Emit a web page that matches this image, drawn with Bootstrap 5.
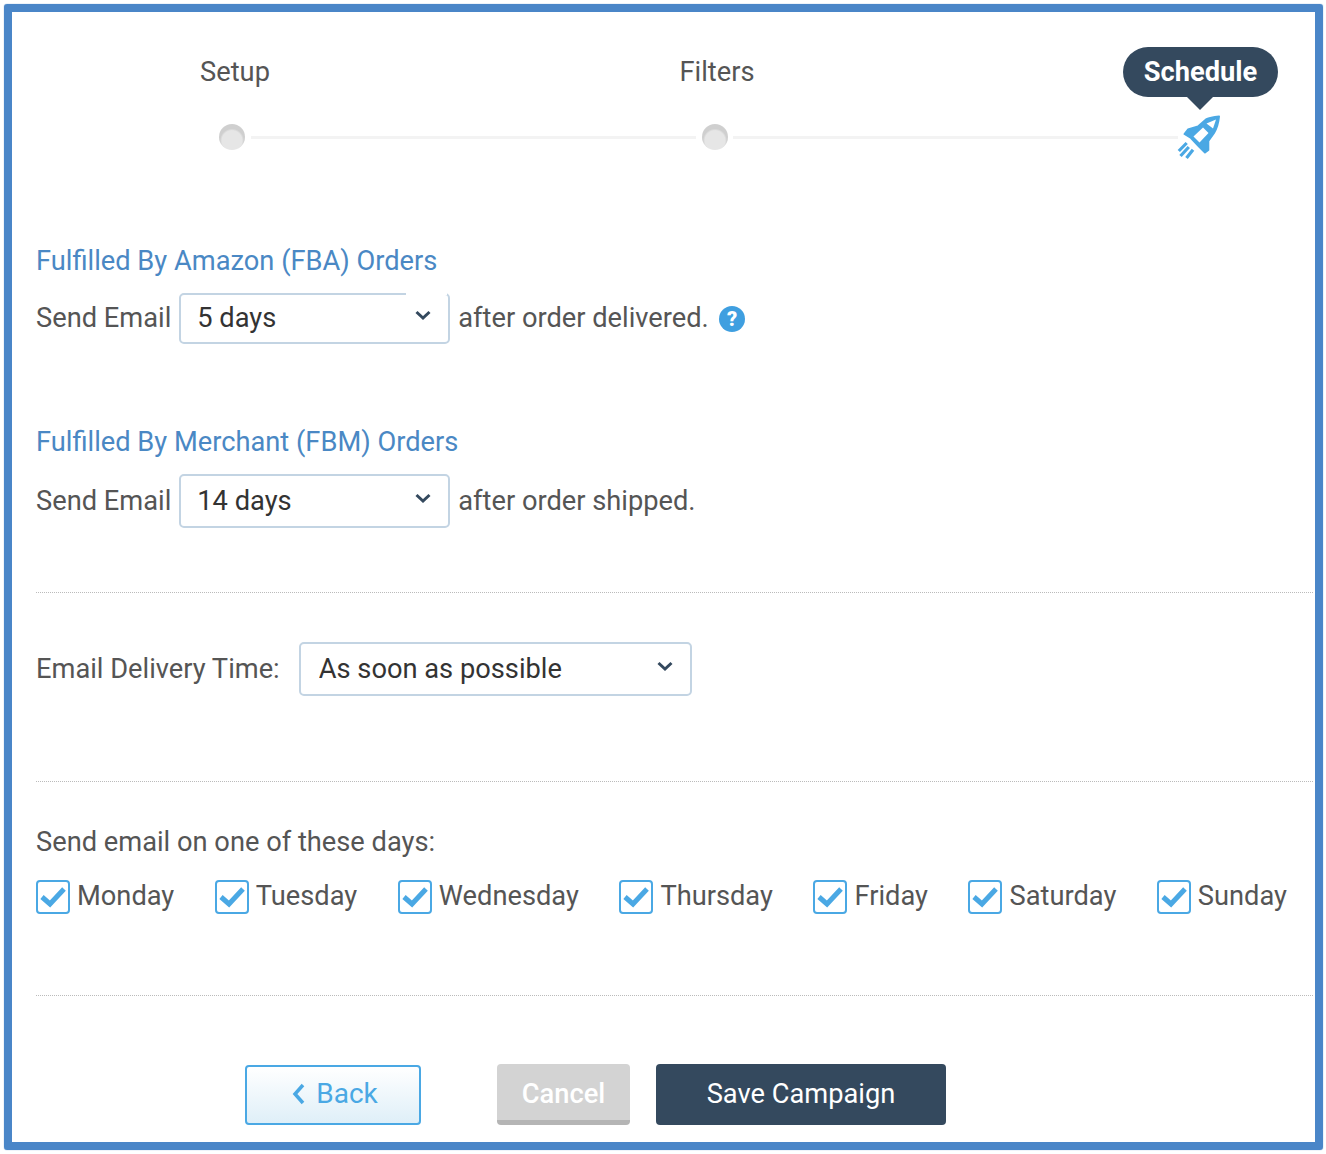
<!DOCTYPE html>
<html lang="en">
<head>
<meta charset="utf-8">
<title>Schedule</title>
<link href="https://cdn.jsdelivr.net/npm/bootstrap@5.3.0/dist/css/bootstrap.min.css" rel="stylesheet">
<style>
html,body{height:100%;background:#fff}
body{padding:4px 3px 4px 4px;font-family:Roboto,"Liberation Sans",sans-serif;font-size:27.25px;line-height:36px;color:#555}
.frame{height:1146px;border:8px solid #4a86c8;border-radius:3px;padding:0 0 0 24px;overflow:hidden;box-shadow:0 0 1px #4a86c8}
.step-name{position:absolute;top:0;transform:translateX(-50%)}
.step-holder{position:relative;height:49px;margin-top:35px}
.step-name.one{left:199px;top:7px}
.step-name.two{left:681px;top:7px}
.bubble{position:absolute;left:1087px;top:0;width:155px;height:50px;border-radius:25px;background:#34495e;color:#fff;font-weight:700;text-align:center;line-height:50px}
.bubble::after{content:"";position:absolute;left:63px;top:49px;border:14px solid transparent;border-top-color:#34495e;border-bottom:0}
.track{height:50px;padding-left:183px;margin-top:16px}
.dot{flex:none;width:26px;height:26px;border-radius:50%;background:radial-gradient(circle at 50% 64%,#e6e6e6 0,#e6e6e6 10px,#cfcfcf 12px)}
.dot-line{flex:none;height:3px;background:#f3f3f3}
.line-a{width:445px;margin:0 6px}
.line-b{width:445px;margin:0 0 0 5px}
.rocket{flex:none;margin-left:-1px}
.sub-head{color:#4a88c4;margin:0;font-size:27.25px;font-weight:400;line-height:36px}
.pick-wrap{position:relative;display:block;flex:none}
.pick{display:block;width:100%;height:100%;padding:0 0 0 16px;border:2px solid #c3d4e3;border-radius:5px;color:#333;font-size:27.25px;font-family:inherit;line-height:36px;background-color:#fff;background-image:url("data:image/svg+xml,%3Csvg xmlns='http://www.w3.org/2000/svg' viewBox='0 0 16 11'%3E%3Cpath d='M1.500 2l6.500 6 6.500-6' fill='none' stroke='%2334495e' stroke-width='3'/%3E%3C/svg%3E");background-repeat:no-repeat;background-size:16px 11px;background-position:right 17px top calc(50% - 3px);box-shadow:none}
.pick-gap::after{content:"";position:absolute;top:0;left:227px;right:3px;height:2px;background:#fff}
.pick-up{padding-bottom:2px}
.pick-wide{padding-left:18px}
.w-a{width:271px}
.h-a{height:51px}
.h-b{height:54px}
.w-b{width:393px;height:54px}
.sec-a{margin-top:81px}
.sec-b{margin-top:80px}
.sec-row{margin-top:14px;gap:8px}
.sec-row2{margin-top:14px;gap:8px}
.lift{padding-bottom:2px}
.help{margin-left:1px;margin-top:1px;flex:none}
.rule{border:0;border-top:1.500px dotted #bbb;opacity:1;margin:0;margin-right:2px}
.rule-1{margin-top:64px}
.time-row{margin-top:49px;gap:19px}
.rule-2{margin-top:85px}
.days-label{margin-top:42px}
.days{margin-top:19px;width:1251px}
.day{display:flex;align-items:center;gap:7px;margin:0;color:#555;height:36px;padding-bottom:2px}
.tick{flex:none;width:34px;height:34px;margin-top:2px;border:2.500px solid #4aa8e4;border-radius:4px;display:flex;align-items:center;justify-content:center;background:#fff}
.rule-3{margin-top:80px}
.actions{margin-top:68px;padding-left:209px}
.act{display:block;border-radius:4px;font-size:27.25px;line-height:36px;height:61px;padding:0 0 2px;text-align:center}
.act-back{width:176px;height:60px;margin-top:1px;border:2px solid #4aa8e4;background:linear-gradient(#fff,#dfeff8);color:#4aa8e4;font-size:28px;padding-left:4px;display:flex;align-items:center;justify-content:center;gap:11px}
.act-cancel{width:133px;margin-left:76px;border:0;border-bottom:5px solid #b5b5b5;background:#d3d3d3;color:#fff;font-weight:500;padding:4px 0 0}
.act-save{width:290px;margin-left:26px;border:0;background:#34495e;color:#fff}
.act-back:hover{color:#4aa8e4}
</style>
</head>
<body>
<div class="frame">
  <div class="step-holder">
    <span class="step-name one">Setup</span>
    <span class="step-name two">Filters</span>
    <span class="bubble">Schedule</span>
  </div>
  <div class="track d-flex align-items-center">
    <span class="dot"></span>
    <span class="dot-line line-a"></span>
    <span class="dot"></span>
    <span class="dot-line line-b"></span>
    <svg class="rocket" width="46" height="46" viewBox="0 0 46 46" fill="none">
      <path d="M42 2.500C37 3 32 4 29 5.500L21 12.500 11 15.500 7.500 20l6.500 4 8 8.500 6 6 3.300-2.500V27L37 19C40 14 41.500 8 42 2.500z" fill="#4aa8e4" stroke="#4aa8e4" stroke-width="2" stroke-linejoin="round"/>
      <path d="M31.500 19L26 13.500 16.500 22.500 22.500 28.500z" fill="#fff"/>
      <path d="M29.500 9.500L39 5.500 36 14.500z" fill="#fff"/>
      <path d="M9.700 29L1.800 37M11.800 33L3.500 42M16 35.700L9.500 44" stroke="#4aa8e4" stroke-width="3.200"/>
    </svg>
  </div>

  <h2 class="sub-head sec-a">Fulfilled By Amazon (FBA) Orders</h2>
  <div class="d-flex align-items-center sec-row">
    <span class="lift">Send Email</span>
    <span class="pick-wrap pick-gap w-a h-a">
      <select class="form-select pick pick-up" aria-label="FBA days"><option>5 days</option></select>
    </span>
    <span class="lift">after order delivered.</span>
    <svg class="help" width="28" height="28" viewBox="0 0 28 28">
      <circle cx="14" cy="14" r="13" fill="#3f9fe0"/>
      <text x="14" y="21" text-anchor="middle" font-family="Roboto,sans-serif" font-weight="900" font-size="20" fill="#fff">?</text>
    </svg>
  </div>

  <h2 class="sub-head sec-b">Fulfilled By Merchant (FBM) Orders</h2>
  <div class="d-flex align-items-center sec-row2">
    <span>Send Email</span>
    <span class="pick-wrap w-a h-b">
      <select class="form-select pick" aria-label="FBM days"><option>14 days</option></select>
    </span>
    <span>after order shipped.</span>
  </div>

  <hr class="rule rule-1">

  <div class="d-flex align-items-center time-row">
    <span>Email Delivery Time:</span>
    <span class="pick-wrap w-b">
      <select class="form-select pick pick-wide" aria-label="Delivery time"><option>As soon as possible</option></select>
    </span>
  </div>

  <hr class="rule rule-2">

  <div class="days-label">Send email on one of these days:</div>
  <div class="d-flex justify-content-between days">
    <label class="day"><span class="tick"><svg width="26" height="22" viewBox="0 0 26 22"><path d="M2 11l8 7L24 3" fill="none" stroke="#4aa8e4" stroke-width="5"/></svg></span>Monday</label>
    <label class="day"><span class="tick"><svg width="26" height="22" viewBox="0 0 26 22"><path d="M2 11l8 7L24 3" fill="none" stroke="#4aa8e4" stroke-width="5"/></svg></span>Tuesday</label>
    <label class="day"><span class="tick"><svg width="26" height="22" viewBox="0 0 26 22"><path d="M2 11l8 7L24 3" fill="none" stroke="#4aa8e4" stroke-width="5"/></svg></span>Wednesday</label>
    <label class="day"><span class="tick"><svg width="26" height="22" viewBox="0 0 26 22"><path d="M2 11l8 7L24 3" fill="none" stroke="#4aa8e4" stroke-width="5"/></svg></span>Thursday</label>
    <label class="day"><span class="tick"><svg width="26" height="22" viewBox="0 0 26 22"><path d="M2 11l8 7L24 3" fill="none" stroke="#4aa8e4" stroke-width="5"/></svg></span>Friday</label>
    <label class="day"><span class="tick"><svg width="26" height="22" viewBox="0 0 26 22"><path d="M2 11l8 7L24 3" fill="none" stroke="#4aa8e4" stroke-width="5"/></svg></span>Saturday</label>
    <label class="day"><span class="tick"><svg width="26" height="22" viewBox="0 0 26 22"><path d="M2 11l8 7L24 3" fill="none" stroke="#4aa8e4" stroke-width="5"/></svg></span>Sunday</label>
  </div>

  <hr class="rule rule-3">

  <div class="d-flex actions">
    <a class="act act-back text-decoration-none" href="#"><svg width="13" height="22" viewBox="0 0 13 22"><path d="M11 2L3 11l8 9" fill="none" stroke="#4aa8e4" stroke-width="3.500"/></svg>Back</a>
    <button class="act act-cancel" type="button">Cancel</button>
    <button class="act act-save" type="button">Save Campaign</button>
  </div>
</div>
<script src="https://cdn.jsdelivr.net/npm/bootstrap@5.3.0/dist/js/bootstrap.bundle.min.js"></script>
</body>
</html>
